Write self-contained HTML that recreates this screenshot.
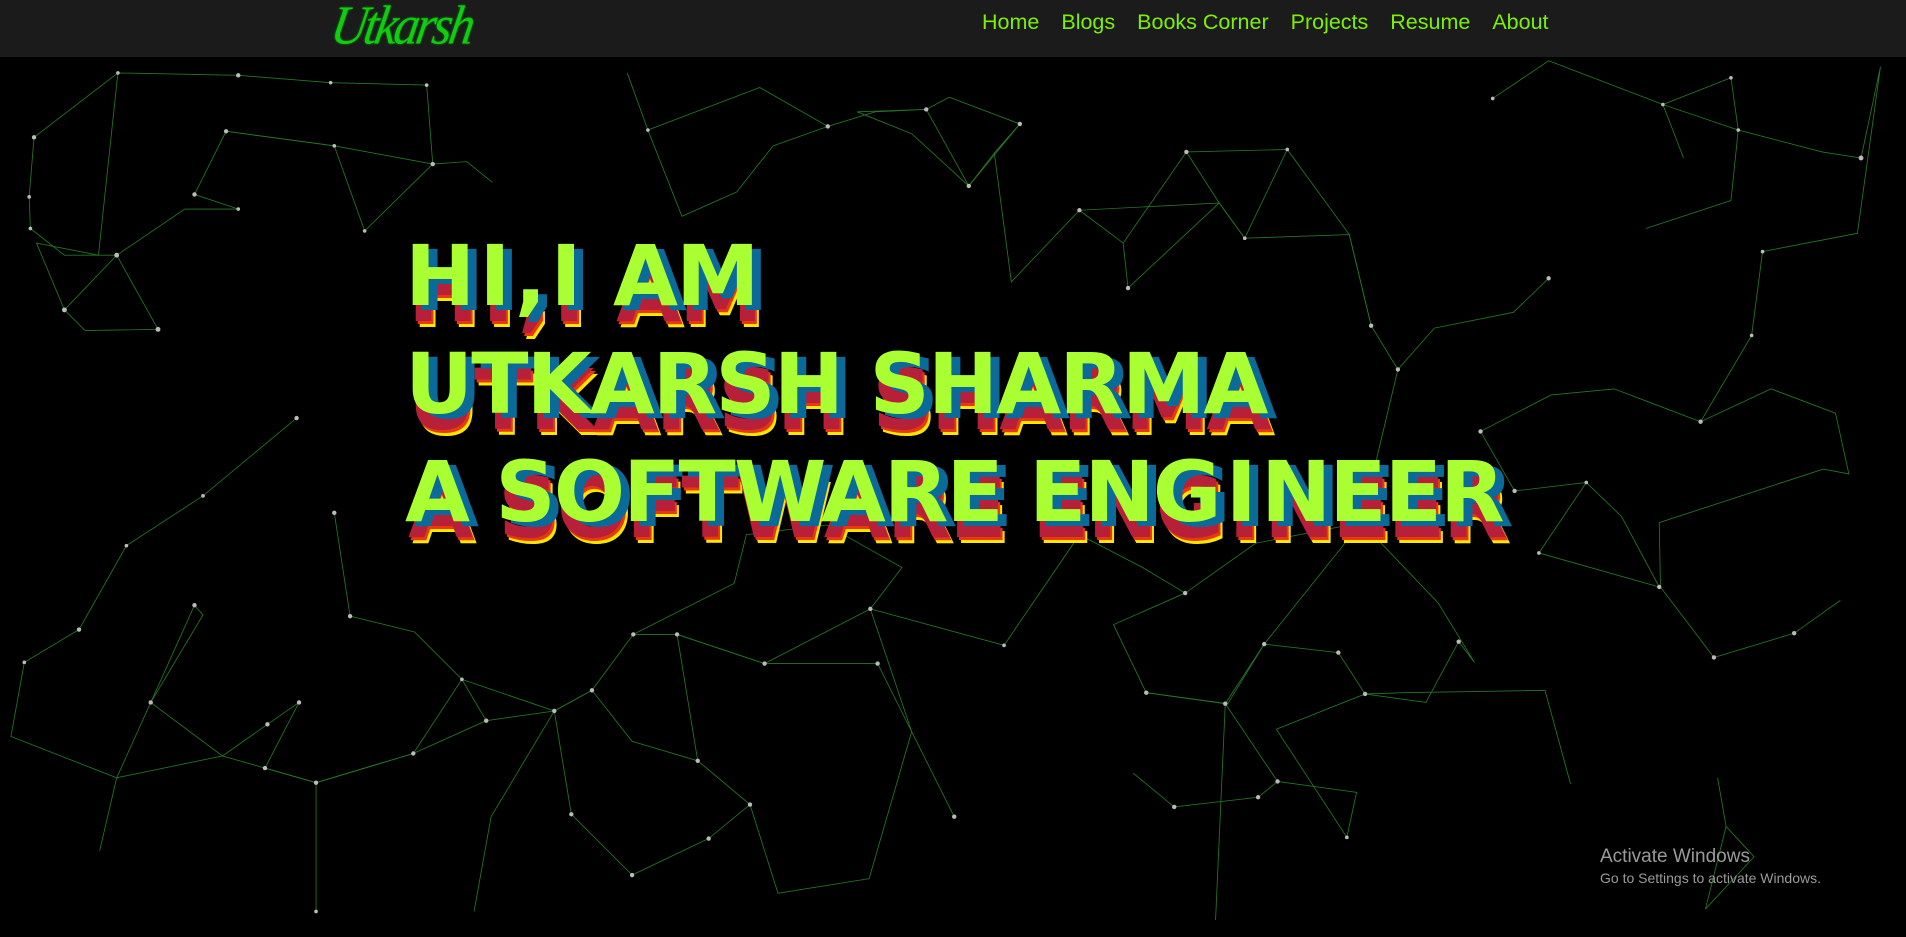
<!DOCTYPE html>
<html><head><meta charset="utf-8"><style>
html,body{margin:0;padding:0;width:1906px;height:937px;overflow:hidden;background:#000;font-family:"Liberation Sans",sans-serif}
.hdr{position:absolute;left:0;top:0;width:1906px;height:57px;background:#1b1b1b;z-index:3}
.logo{position:absolute;left:332px;top:-4px;font-family:"Liberation Serif",serif;font-style:italic;font-size:50px;color:#11cc11;letter-spacing:-3px;transform:skewX(-10deg) scaleY(1.1);font-weight:normal;text-shadow:0 0 2px #0a0}
.nav{position:absolute;top:10px;left:982px;font-size:21.5px;color:#7cf000;white-space:nowrap}
.nav span{margin-right:22px}
svg.bg{position:absolute;left:0;top:0;z-index:1}
.hero{position:absolute;left:405px;top:222px;z-index:2;font-family:"DejaVu Sans","Liberation Sans",sans-serif;font-weight:bold;font-size:84px;line-height:108px;color:#aaff33;letter-spacing:-2px;
text-shadow:9px 5px 0 #0a6b9a,3px 16px 0 #b8203a,5px 19px 0 #e8380e,7px 22px 0 #ffe600;white-space:nowrap}
.hero i{font-style:normal;padding:0 6px}
.win{position:absolute;left:1600px;top:846px;color:#9a9a9a;z-index:2}
.win .a{font-size:19px}.win .b{font-size:14px;margin-top:2px}
</style></head><body>
<div class="hdr"><div class="logo">Utkarsh</div>
<div class="nav"><span>Home</span><span>Blogs</span><span>Books Corner</span><span>Projects</span><span>Resume</span><span>About</span></div></div>
<svg class="bg" width="1906" height="937" viewBox="0 0 1568 771" preserveAspectRatio="none">
<g stroke="#2e8b2e" stroke-width="0.7" fill="none" opacity="0.85">
<polyline points="28,113 97,60 196,62 272,68 351,70 356,135 275,120 186,108 160,160 196,172 152,172 96,210 53,210 25,188 24,162 28,113"/>
<polyline points="53,255 96,210 130,271 70,272 53,255 30,200 81,210 97,60"/>
<polyline points="186,108 275,120 300,190 356,135 384,133 405,150"/>
<polyline points="516,60 533,107 625,72 681,104 720,92 762,90 797,153 839,102 818,126 832,232 888,173 924,200 976,125 1059,123 1110,193 1128,268 1150,304 1180,270 1245,257 1274,229"/>
<polyline points="681,104 636,120 606,158 561,178 533,107"/>
<polyline points="976,125 1003,167 1024,196 1059,123"/>
<polyline points="924,200 928,237 1003,167 888,173"/>
<polyline points="1228,81 1274,50 1368,86 1424,64 1430,107 1499,125 1531,130 1547,55 1528,192 1450,207 1441,276 1399,347 1328,320 1276,325 1218,355 1246,404"/>
<polyline points="1354,188 1424,165 1430,107 1368,86 1385,130"/>
<polyline points="1399,347 1457,320 1510,340 1521,390 1500,386 1365,430 1366,483 1410,541 1476,521 1514,494"/>
<polyline points="1305,397 1266,455 1365,483 1334,425 1305,397 1246,404"/>
<polyline points="244,344 167,408 104,449 65,518 20,545 9,606 96,640 124,578 167,506 160,498 124,578 183,622 220,596 246,578 218,632 260,644 340,620 380,559 456,585 487,568 521,522 557,522 629,546 716,501 742,467 680,432 614,440 604,480 521,522"/>
<polyline points="275,422 288,507 341,520 380,559 400,593 456,585 470,670 520,720 583,690 617,662 574,626 520,610 487,568 456,585 404,672 390,750"/>
<polyline points="617,662 640,735 715,723 750,602 722,546 629,546 557,522 574,626"/>
<polyline points="400,593 340,620 260,644 260,750"/>
<polyline points="826,531 888,440 940,467 975,488 916,514 943,570 1010,579 1040,530 1101,537 1123,571 1173,578 1200,528 1213,545 1183,496 1120,430 1033,447 975,488"/>
<polyline points="932,636 966,664 1035,656 1051,643 1008,579 943,570"/>
<polyline points="1051,643 1116,652 1108,689 1050,600 1123,571 1155,570 1271,568 1292,645"/>
<polyline points="1413,640 1420,680 1443,705 1403,748 1420,680"/>
<polyline points="82,700 96,640 183,622 260,644"/>
<polyline points="705,92 762,90 781,80 839,102 818,126 797,153 750,110 705,92"/>
<polyline points="1128,268 1110,193 1024,196 1003,167"/>
<polyline points="785,672 750,602 716,501 826,531"/>
<polyline points="1000,757 1008,579 1040,530 1120,430 1150,304"/>
</g>
<g fill="#bbb">
<circle cx="28" cy="113" r="1.8"/><circle cx="97" cy="60" r="1.5"/><circle cx="196" cy="62" r="1.8"/><circle cx="272" cy="68" r="1.5"/><circle cx="351" cy="70" r="1.5"/><circle cx="356" cy="135" r="1.8"/><circle cx="275" cy="120" r="1.5"/><circle cx="186" cy="108" r="1.8"/><circle cx="160" cy="160" r="1.8"/><circle cx="196" cy="172" r="1.5"/><circle cx="96" cy="210" r="2"/><circle cx="53" cy="255" r="2"/><circle cx="130" cy="271" r="2"/><circle cx="24" cy="162" r="1.5"/><circle cx="25" cy="188" r="1.5"/><circle cx="300" cy="190" r="1.5"/>
<circle cx="533" cy="107" r="1.5"/><circle cx="681" cy="104" r="1.8"/><circle cx="762" cy="90" r="1.8"/><circle cx="839" cy="102" r="1.8"/><circle cx="797" cy="153" r="1.8"/><circle cx="888" cy="173" r="1.8"/><circle cx="976" cy="125" r="1.8"/><circle cx="1059" cy="123" r="1.5"/><circle cx="1128" cy="268" r="1.8"/><circle cx="1150" cy="304" r="1.8"/><circle cx="1274" cy="229" r="1.8"/><circle cx="928" cy="237" r="1.8"/><circle cx="1024" cy="196" r="1.5"/>
<circle cx="1228" cy="81" r="1.5"/><circle cx="1368" cy="86" r="1.5"/><circle cx="1424" cy="64" r="1.5"/><circle cx="1430" cy="107" r="1.5"/><circle cx="1531" cy="130" r="2"/><circle cx="1450" cy="207" r="1.5"/><circle cx="1441" cy="276" r="1.5"/><circle cx="1399" cy="347" r="1.8"/><circle cx="1218" cy="355" r="1.8"/><circle cx="1246" cy="404" r="1.8"/><circle cx="1305" cy="397" r="1.5"/><circle cx="1365" cy="483" r="1.8"/><circle cx="1410" cy="541" r="1.8"/><circle cx="1476" cy="521" r="1.8"/><circle cx="1266" cy="455" r="1.5"/>
<circle cx="244" cy="344" r="1.8"/><circle cx="167" cy="408" r="1.5"/><circle cx="104" cy="449" r="1.5"/><circle cx="65" cy="518" r="1.8"/><circle cx="20" cy="545" r="1.5"/><circle cx="124" cy="578" r="1.8"/><circle cx="160" cy="498" r="1.8"/><circle cx="220" cy="596" r="1.8"/><circle cx="246" cy="578" r="1.8"/><circle cx="218" cy="632" r="1.8"/><circle cx="260" cy="644" r="1.8"/><circle cx="340" cy="620" r="1.8"/><circle cx="380" cy="559" r="1.5"/><circle cx="400" cy="593" r="1.8"/><circle cx="456" cy="585" r="1.8"/><circle cx="487" cy="568" r="1.8"/><circle cx="521" cy="522" r="1.8"/><circle cx="557" cy="522" r="1.8"/><circle cx="629" cy="546" r="1.8"/><circle cx="716" cy="501" r="1.8"/><circle cx="288" cy="507" r="1.8"/><circle cx="275" cy="422" r="1.8"/><circle cx="470" cy="670" r="1.8"/><circle cx="520" cy="720" r="1.8"/><circle cx="583" cy="690" r="1.8"/><circle cx="617" cy="662" r="1.8"/><circle cx="574" cy="626" r="1.8"/><circle cx="785" cy="672" r="1.8"/><circle cx="722" cy="546" r="1.8"/><circle cx="826" cy="531" r="1.5"/><circle cx="260" cy="750" r="1.5"/>
<circle cx="975" cy="488" r="1.8"/><circle cx="943" cy="570" r="1.8"/><circle cx="1008" cy="579" r="1.8"/><circle cx="1040" cy="530" r="1.8"/><circle cx="1101" cy="537" r="1.8"/><circle cx="1123" cy="571" r="1.8"/><circle cx="1200" cy="528" r="1.8"/><circle cx="966" cy="664" r="1.8"/><circle cx="1035" cy="656" r="1.8"/><circle cx="1051" cy="643" r="1.8"/><circle cx="1108" cy="689" r="1.5"/><circle cx="1120" cy="430" r="1.5"/>
</g></svg>
<div class="hero">H<i>I</i>,<i>I</i> AM<br>UTKARSH SHARMA<br>A SOFTWARE ENG<i>I</i>NEER</div>
<div class="win"><div class="a">Activate Windows</div><div class="b">Go to Settings to activate Windows.</div></div>
</body></html>
